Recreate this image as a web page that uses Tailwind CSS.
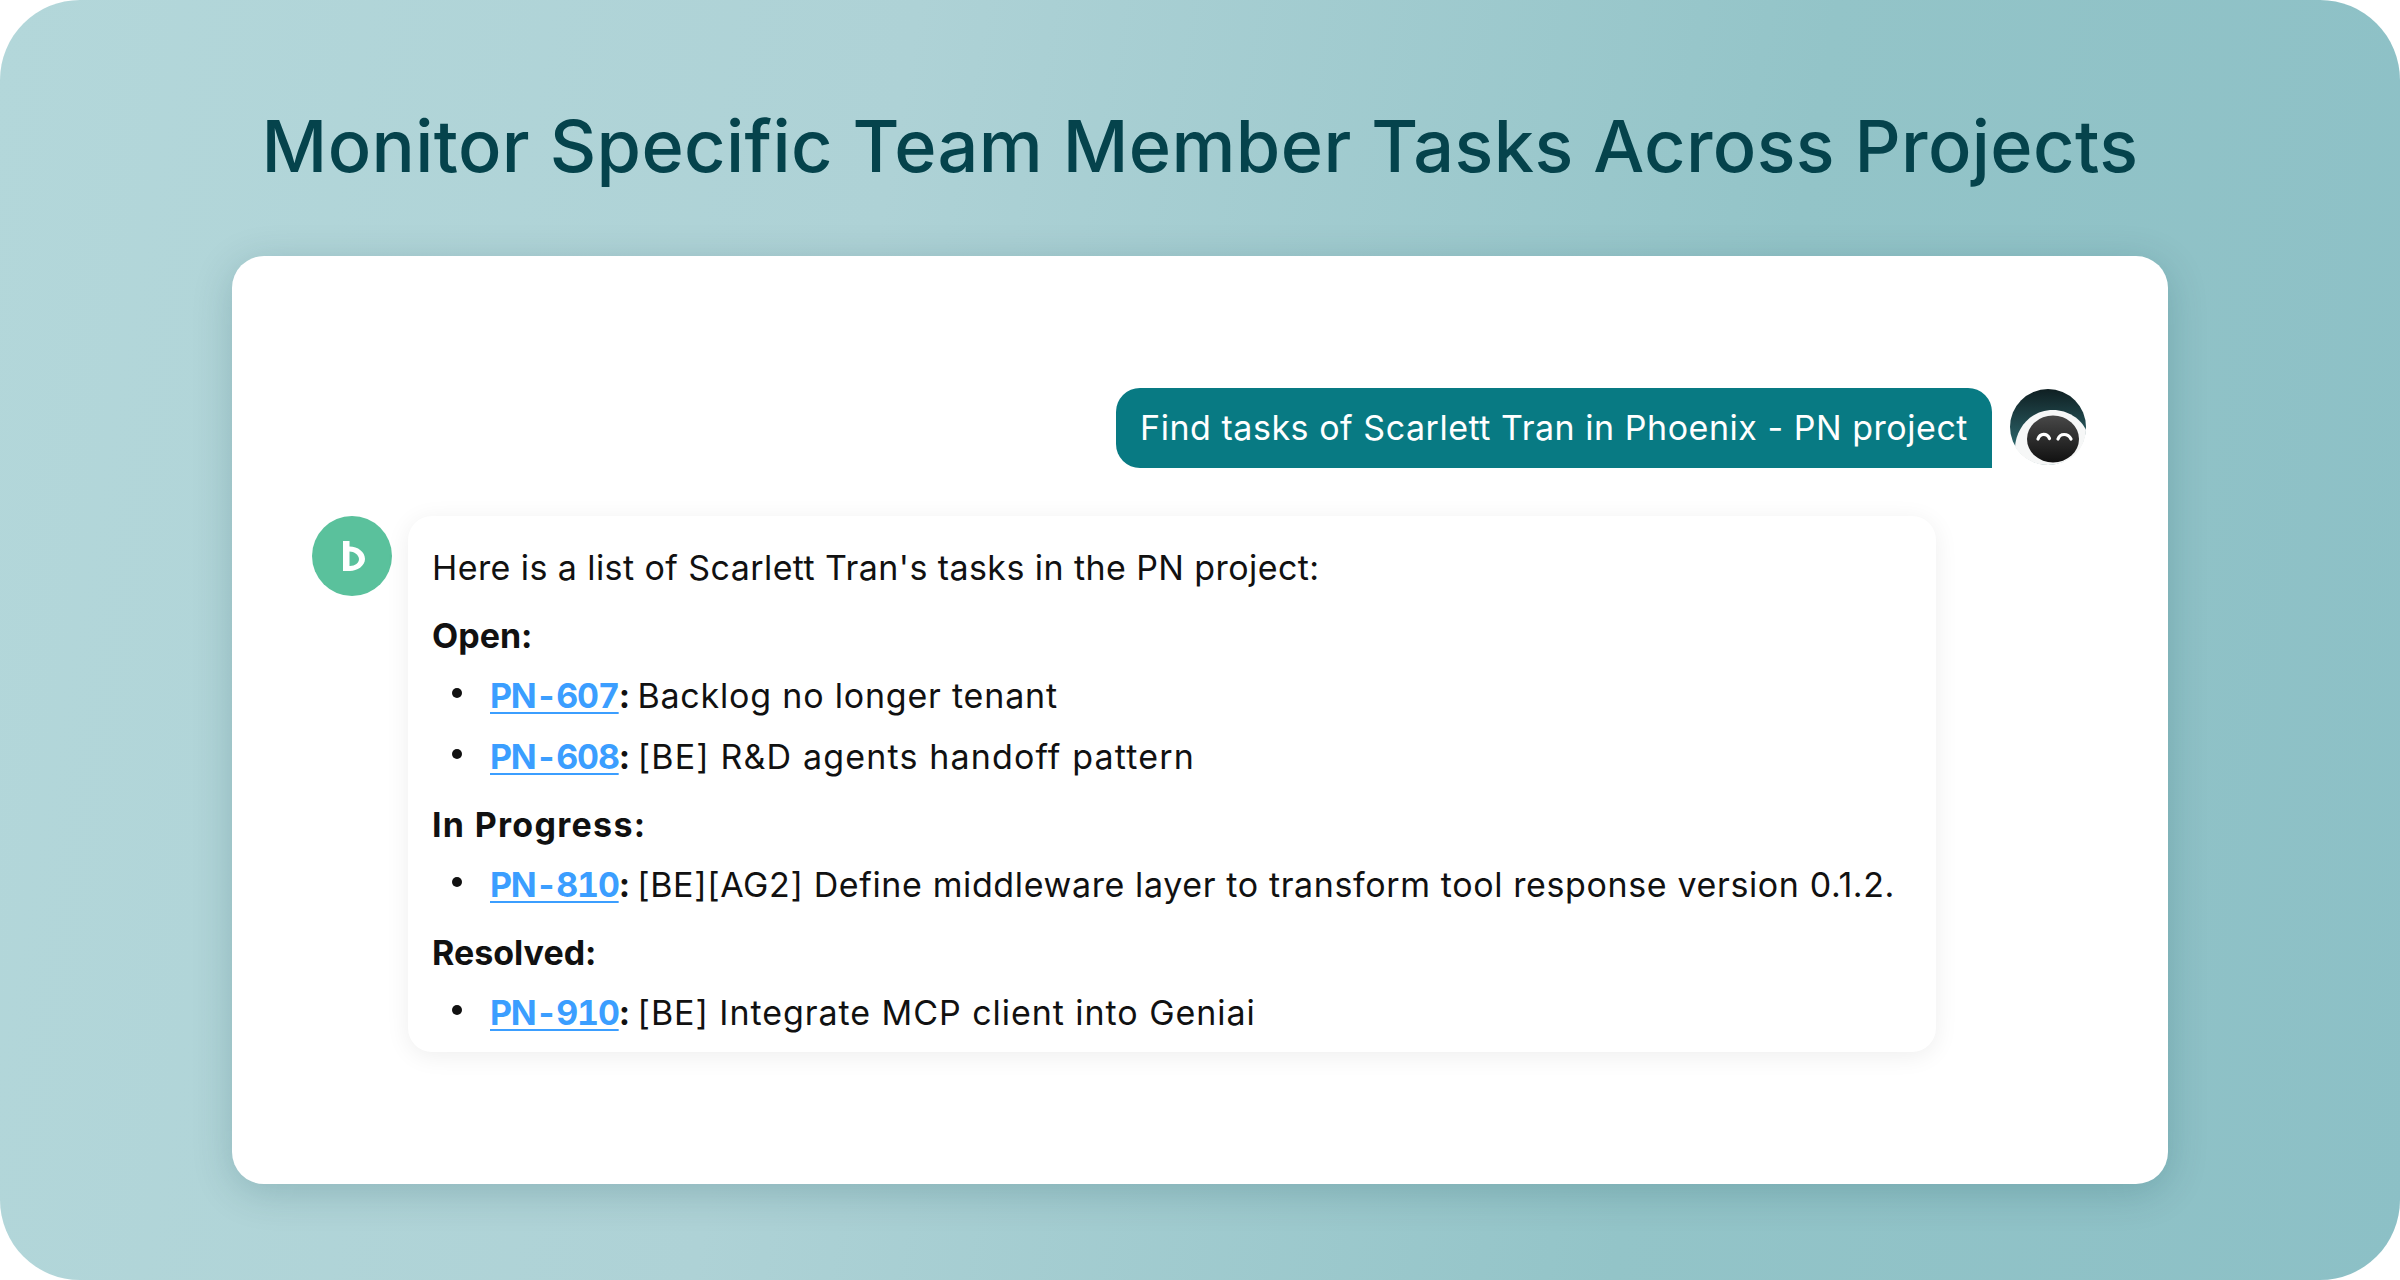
<!DOCTYPE html>
<html lang="en">
  <head>
    <meta charset="UTF-8" />
    <title>Monitor Specific Team Member Tasks</title>
    <script src="https://cdn.jsdelivr.net/npm/@tailwindcss/browser@4"></script>
  </head>
  <body class="bg-white font-['Inter',sans-serif]">
    <div class="w-[2400px] h-[1280px] rounded-[80px] bg-[linear-gradient(100deg,#b3d7da_0%,#aed2d6_35%,#93c4c8_70%,#8cc0c6_100%)] flex flex-col items-center">
      <h1 class="mt-[100px] h-[92px] leading-[92px] text-[72px] font-[550] tracking-[0.38px] text-[#05434c] whitespace-nowrap">
        Monitor Specific Team Member Tasks Across Projects
      </h1>
      <div class="mt-[64px] w-[1936px] h-[928px] bg-white rounded-[32px] shadow-[0_8px_40px_rgba(0,60,70,0.2)] pt-[132px] pl-[80px] pr-[82px]">
        <div class="flex justify-end items-start gap-[18px]">
          <div class="h-[80px] px-[24px] pb-[2px] flex items-center bg-[#087a83] text-white text-[34px] tracking-[0.53px] whitespace-nowrap rounded-t-[24px] rounded-bl-[24px]">
            Find tasks of Scarlett Tran in Phoenix - PN project
          </div>
          <svg class="w-[76px] h-[76px] mt-[1px]" viewBox="0 0 76 76">
            <defs>
              <linearGradient id="ring" x1="0" y1="0" x2="0" y2="1">
                <stop offset="0" stop-color="#0f1f22" />
                <stop offset="0.8" stop-color="#2f6a70" />
              </linearGradient>
              <linearGradient id="face" x1="0" y1="0" x2="0" y2="1">
                <stop offset="0" stop-color="#484848" />
                <stop offset="1" stop-color="#111111" />
              </linearGradient>
            </defs>
            <circle cx="38" cy="38" r="38" fill="url(#ring)" />
            <path d="M5 58 C6 40 20 21 43 21 C58 21 71 30 76 41 C75 62 58 76 38 76 C24 76 12 69 5 58 Z" fill="#f6f7f7" />
            <ellipse cx="43" cy="50" rx="26" ry="23.5" fill="url(#face)" />
            <path d="M28 50 C30 44 37 44 39.5 49.5" fill="none" stroke="#fff" stroke-width="3.2" stroke-linecap="round" />
            <path d="M48 50 C50 44 58 44 61 50" fill="none" stroke="#fff" stroke-width="3.2" stroke-linecap="round" />
          </svg>
        </div>
        <div class="mt-[48px] flex items-start gap-[16px]">
          <div class="w-[80px] h-[80px] rounded-full bg-[#5ac19c] flex items-center justify-center shrink-0">
            <svg class="w-[24px] h-[32px] ml-[4px]" viewBox="0 0 24 32">
              <path d="M1 1 H7.5 V6.5 C16 6.5 23 12 23 19 C23 26 15 31 8 31 H1 Z M7.5 11.5 V26 H8 C13 26 17 23 17 19 C17 15 12 11.5 7.5 11.5 Z" fill="#fff" fill-rule="evenodd" />
            </svg>
          </div>
          <div class="w-[1528px] h-[536px] rounded-[24px] bg-white shadow-[0_4px_24px_rgba(0,0,0,0.07)] pt-[26px] pl-[24px] text-[34px] leading-[52px] text-[#111111]">
            <p class="tracking-[0.42px]">Here is a list of Scarlett Tran's tasks in the PN project:</p>
            <p class="mt-[16px] font-bold">Open:</p>
            <ul class="mt-[8px] flex flex-col gap-[9px]">
              <li class="flex items-center pl-[20px]">
                <span class="w-[10px] h-[10px] rounded-full bg-[#111111] mr-[28px] mb-[6px]"></span>
                <div class="tracking-[0.8px]"><a class="font-bold tracking-[-1.2px] tabular-nums text-[#3b9eff] underline underline-offset-4 decoration-2">PN-607</a><b class="tracking-[-3px]">:</b> Backlog no longer tenant</div>
              </li>
              <li class="flex items-center pl-[20px]">
                <span class="w-[10px] h-[10px] rounded-full bg-[#111111] mr-[28px] mb-[6px]"></span>
                <div class="tracking-[1.15px]"><a class="font-bold tracking-[-1.2px] tabular-nums text-[#3b9eff] underline underline-offset-4 decoration-2">PN-608</a><b class="tracking-[-3px]">:</b> [BE] R&amp;D agents handoff pattern</div>
              </li>
            </ul>
            <p class="mt-[16px] font-bold tracking-[1.3px]">In Progress:</p>
            <ul class="mt-[8px]">
              <li class="flex items-center pl-[20px]">
                <span class="w-[10px] h-[10px] rounded-full bg-[#111111] mr-[28px] mb-[6px]"></span>
                <div class="tracking-[0.62px]"><a class="font-bold tracking-[-1.2px] tabular-nums text-[#3b9eff] underline underline-offset-4 decoration-2">PN-810</a><b class="tracking-[-3px]">:</b> [BE][AG2] Define middleware layer to transform tool response version 0.1.2.</div>
              </li>
            </ul>
            <p class="mt-[16px] font-bold">Resolved:</p>
            <ul class="mt-[8px]">
              <li class="flex items-center pl-[20px]">
                <span class="w-[10px] h-[10px] rounded-full bg-[#111111] mr-[28px] mb-[6px]"></span>
                <div class="tracking-[0.95px]"><a class="font-bold tracking-[-1.2px] tabular-nums text-[#3b9eff] underline underline-offset-4 decoration-2">PN-910</a><b class="tracking-[-3px]">:</b> [BE] Integrate MCP client into Geniai</div>
              </li>
            </ul>
          </div>
        </div>
      </div>
    </div>
  </body>
</html>
